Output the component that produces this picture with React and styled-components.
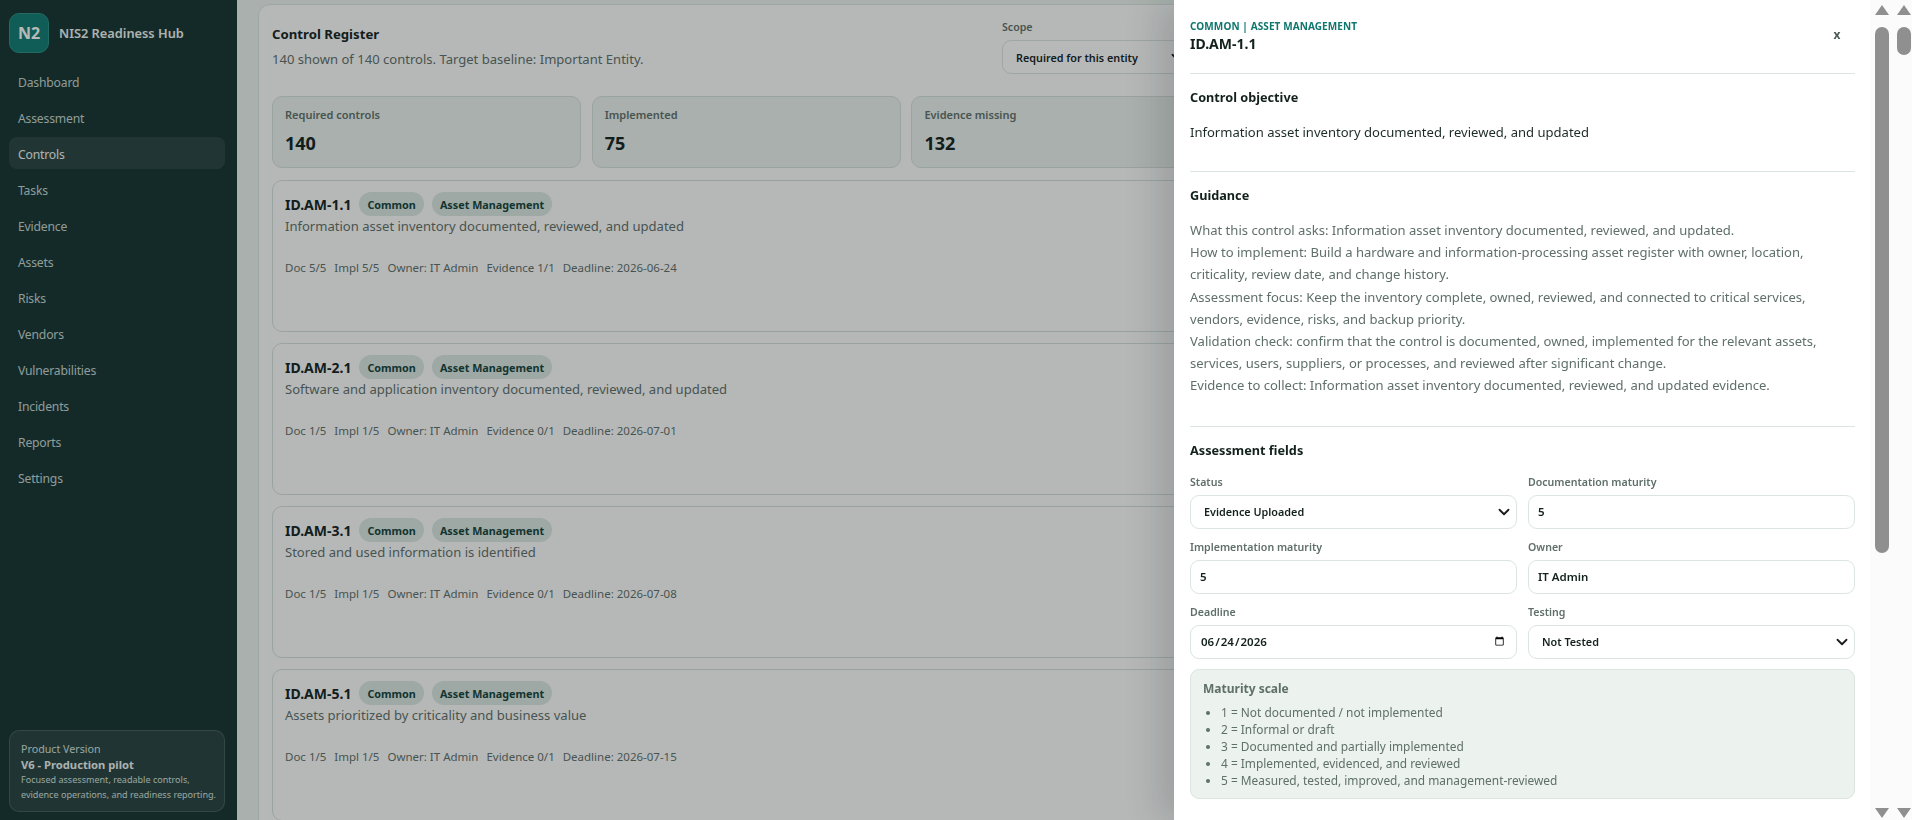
import React from "react";
import styled, { createGlobalStyle } from "styled-components";
import { ChevronDown } from "lucide-react";

const Global = createGlobalStyle`
  html, body { margin: 0; height: 100%; overflow: hidden; background: #ebf3ee; }
  * { box-sizing: border-box; }
  body { font-family: "Noto Sans", "Liberation Sans", sans-serif; color: #13211d; }
`;

const Shell = styled.div`
  display: grid;
  grid-template-columns: 237px 1fr;
  width: 1912px;
  height: 820px;
  overflow: hidden;
`;

const Sidebar = styled.aside`
  background: #163331;
  padding: 13px 12px 8px 9px;
  display: flex;
  flex-direction: column;
  height: 820px;
`;

const Brand = styled.div`
  display: flex;
  align-items: center;
  gap: 10px;
  margin-bottom: 12px;
`;

const LogoMark = styled.div`
  width: 40px;
  height: 40px;
  border-radius: 10px;
  background: #0f7b71;
  border: 1px solid #2b8f85;
  color: #fff;
  font-size: 16px;
  font-weight: 700;
  display: flex;
  align-items: center;
  justify-content: center;
`;

const BrandName = styled.div`
  color: #f0f5f3;
  font-size: 12.8px;
  font-weight: 600;
`;

const Nav = styled.nav`
  display: flex;
  flex-direction: column;
  gap: 4px;
`;

const NavItem = styled.a`
  height: 32px;
  padding: 2px 9px 0;
  display: flex;
  align-items: center;
  border-radius: 8px;
  font-size: 12.2px;
  letter-spacing: -0.2px;
  color: ${(p) => (p.$active ? "#f3f7f5" : "#c6d6d1")};
  background: ${(p) => (p.$active ? "rgba(255,255,255,0.08)" : "transparent")};
`;

const VersionCard = styled.div`
  margin-top: auto;
  height: 82px;
  padding: 11px 10px 9px 11px;
  border-radius: 10px;
  background: rgba(255, 255, 255, 0.07);
  border: 1px solid rgba(255, 255, 255, 0.14);
  color: #d5e2de;
`;

const VersionLabel = styled.div`
  font-size: 10.7px;
  line-height: 14.5px;
`;

const VersionName = styled.div`
  font-size: 11.2px;
  line-height: 15px;
  font-weight: 700;
  color: #eef4f2;
`;

const VersionNote = styled.div`
  font-size: 9.05px;
  line-height: 15px;
  white-space: nowrap;
`;

const Main = styled.main`
  padding: 4px 0 0 21px;
  min-width: 0;
  overflow: hidden;
`;

const Panel = styled.section`
  width: 1616px;
  padding: 12px 13px;
  background: #fefefe;
  border: 1px solid #dce5e0;
  border-radius: 12px 12px 0 0;
  height: 900px;
`;

const PanelHead = styled.header`
  display: flex;
  justify-content: space-between;
  height: 79px;
`;

const PanelTitle = styled.h2`
  margin: 7px 0 0;
  font-size: 13.2px;
  line-height: 20px;
  font-weight: 700;
`;

const PanelSub = styled.p`
  margin: 6px 0 0;
  font-size: 13.05px;
  line-height: 18px;
  color: #5f6f69;
`;

const ScopeField = styled.div`
  width: 188px;
  margin-right: 670px;
  padding-top: 2px;
`;

const FieldLabel = styled.label`
  display: block;
  font-size: 10.6px;
  line-height: 16px;
  font-weight: 600;
  color: #5f6f69;
`;

const Stats = styled.div`
  display: grid;
  grid-template-columns: repeat(5, 1fr);
  gap: 10.5px;
  margin-bottom: 12px;
`;

const StatCard = styled.div`
  height: 72px;
  padding: 10px 12px;
  background: #ecf2ee;
  border: 1px solid #d5e0da;
  border-radius: 10px;
`;

const StatLabel = styled.div`
  font-size: 11px;
  line-height: 16px;
  font-weight: 600;
  color: #5f6f69;
`;

const StatValue = styled.div`
  margin-top: 8px;
  font-size: 18px;
  line-height: 24px;
  font-weight: 700;
`;

const CardList = styled.div`
  display: flex;
  flex-direction: column;
  gap: 11px;
`;

const ControlCard = styled.article`
  height: 152px;
  padding: 11px 12px;
  background: #fefefe;
  border: 1px solid #d5e0da;
  border-radius: 10px;
`;

const CardTop = styled.div`
  display: flex;
  align-items: center;
  gap: 8px;
  height: 24px;
`;

const ControlId = styled.strong`
  font-size: 14px;
  font-weight: 700;
`;

const Chip = styled.span`
  height: 24px;
  padding: 0 8px;
  display: inline-flex;
  align-items: center;
  border-radius: 12px;
  background: #dbe8e2;
  color: #14413a;
  font-size: 10.8px;
  font-weight: 700;
`;

const CardDesc = styled.p`
  margin: 0;
  font-size: 13.05px;
  line-height: 20px;
  color: #5f6f69;
`;

const CardMeta = styled.div`
  display: flex;
  gap: 8px;
  margin-top: 24px;
  font-size: 11.5px;
  line-height: 16px;
  color: #5f6f69;
`;

const Overlay = styled.div`
  position: fixed;
  inset: 0;
  background: rgba(16, 24, 22, 0.3);
`;

const Drawer = styled.aside`
  position: fixed;
  top: 0;
  bottom: 0;
  right: 0;
  left: 1174px;
  display: flex;
  background: #fff;
  box-shadow: -14px 0 34px rgba(10, 20, 18, 0.16);
`;

const DrawerBody = styled.div`
  flex: 1;
  min-width: 0;
  padding: 18px 15px 0 16px;
  height: 900px;
`;

const DrawerHead = styled.header`
  display: flex;
  justify-content: space-between;
  align-items: flex-start;
  height: 56px;
  border-bottom: 1px solid #dce5e0;
`;

const Kicker = styled.div`
  font-size: 10px;
  line-height: 16px;
  font-weight: 700;
  letter-spacing: 0.01em;
  text-transform: uppercase;
  color: #0f766e;
`;

const DrawerTitle = styled.h3`
  margin: 0;
  font-size: 14px;
  line-height: 20px;
  font-weight: 700;
`;

const CloseButton = styled.button`
  width: 30px;
  height: 30px;
  margin: 1px 3px 0 0;
  border: 0;
  background: transparent;
  font: 700 12px "Noto Sans", sans-serif;
  color: #4b5a55;
`;

const Section = styled.section`
  padding-top: 13px;
  padding-bottom: ${(p) => p.$pb || 0}px;
  border-bottom: ${(p) => (p.$plain ? "0" : "1px solid #dce5e0")};
`;

const SectionTitle = styled.h4`
  margin: 0;
  font-size: 12.7px;
  line-height: 20px;
  font-weight: 700;
`;

const Objective = styled.p`
  margin: 15px 0 0;
  font-size: 13.05px;
  line-height: 20px;
  color: #1c2b27;
`;

const GuidanceText = styled.div`
  margin-top: 14px;
  font-size: 13.05px;
  line-height: 22.2px;
  color: #5f6f69;
`;

const FormGrid = styled.div`
  display: grid;
  grid-template-columns: 1fr 1fr;
  column-gap: 11px;
  row-gap: 10px;
  margin-top: 14px;
`;

const Field = styled.div`
  display: flex;
  flex-direction: column;
  gap: 5px;
`;

const Control = styled.input`
  width: 100%;
  height: 34px;
  padding: 0 9px;
  border: 1px solid #dce5e0;
  border-radius: 9px;
  background: #fff;
  font: 600 11.5px "Noto Sans", sans-serif;
  color: #13211d;
`;

const PickerWrap = styled.div`
  position: relative;
  width: 100%;
  height: 34px;
  margin-top: ${(p) => p.$mt || 0}px;
`;

const Picker = styled.select`
  appearance: none;
  width: 100%;
  height: 34px;
  padding: 0 30px 0 13px;
  border: 1px solid #dce5e0;
  border-radius: 9px;
  background: #fff;
  font: 600 10.8px "Noto Sans", sans-serif;
  color: #13211d;
`;

const PickerArrow = styled(ChevronDown)`
  position: absolute;
  right: 4px;
  top: 8px;
  width: 18px;
  height: 18px;
  stroke-width: 2.4;
  color: #1a1a1a;
  pointer-events: none;
`;

const ScaleBox = styled.div`
  margin-top: 10px;
  height: 130px;
  padding: 10px 12px;
  background: #ecf2ee;
  border: 1px solid #dce5e0;
  border-radius: 9px;
  color: #5f6f69;
`;

const ScaleTitle = styled.div`
  font-size: 12px;
  line-height: 18px;
  font-weight: 700;
`;

const ScaleList = styled.ul`
  margin: 6px 0 0;
  padding-left: 18px;
  font-size: 11.9px;
  line-height: 17px;
`;

const Gutter = styled.div`
  width: 42px;
  background: #fbfbfb;
  display: flex;
  gap: 8px;
  padding-left: 5px;
  flex: none;
`;

const Rail = styled.div`
  width: 14px;
  height: 820px;
  position: relative;
`;

const Thumb = styled.div`
  position: absolute;
  left: 0;
  top: 27px;
  width: 14px;
  height: ${(p) => p.$h}px;
  border-radius: 7px;
  background: #8f8f8f;
`;

const Arrow = styled.div`
  position: absolute;
  left: 0;
  ${(p) => (p.$down ? "bottom: 2px;" : "top: 5px;")}
  width: 0;
  height: 0;
  border-left: 7px solid transparent;
  border-right: 7px solid transparent;
  ${(p) => (p.$down ? "border-top: 10px solid #8f8f8f;" : "border-bottom: 10px solid #8f8f8f;")}
`;

const navItems = ["Dashboard", "Assessment", "Controls", "Tasks", "Evidence", "Assets", "Risks", "Vendors", "Vulnerabilities", "Incidents", "Reports", "Settings"];

const controls = [
  { id: "ID.AM-1.1", desc: "Information asset inventory documented, reviewed, and updated", doc: 5, impl: 5, ev: 1, date: "2026-06-24" },
  { id: "ID.AM-2.1", desc: "Software and application inventory documented, reviewed, and updated", doc: 1, impl: 1, ev: 0, date: "2026-07-01" },
  { id: "ID.AM-3.1", desc: "Stored and used information is identified", doc: 1, impl: 1, ev: 0, date: "2026-07-08" },
  { id: "ID.AM-5.1", desc: "Assets prioritized by criticality and business value", doc: 1, impl: 1, ev: 0, date: "2026-07-15" },
];

const guidance = [
  "What this control asks: Information asset inventory documented, reviewed, and updated.",
  "How to implement: Build a hardware and information-processing asset register with owner, location, criticality, review date, and change history.",
  "Assessment focus: Keep the inventory complete, owned, reviewed, and connected to critical services, vendors, evidence, risks, and backup priority.",
  "Validation check: confirm that the control is documented, owned, implemented for the relevant assets, services, users, suppliers, or processes, and reviewed after significant change.",
  "Evidence to collect: Information asset inventory documented, reviewed, and updated evidence.",
];

const scale = [
  "1 = Not documented / not implemented",
  "2 = Informal or draft",
  "3 = Documented and partially implemented",
  "4 = Implemented, evidenced, and reviewed",
  "5 = Measured, tested, improved, and management-reviewed",
];

function Select({ label, mt }) {
  return (
    <PickerWrap $mt={mt}>
      <Picker defaultValue={label}><option value={label}>{label}</option></Picker>
      <PickerArrow />
    </PickerWrap>
  );
}

export default function App() {
  return (
    <>
      <Global />
      <Shell>
        <Sidebar>
          <Brand>
            <LogoMark>N2</LogoMark>
            <BrandName>NIS2 Readiness Hub</BrandName>
          </Brand>
          <Nav>
            {navItems.map((n) => (
              <NavItem key={n} $active={n === "Controls"}>{n}</NavItem>
            ))}
          </Nav>
          <VersionCard>
            <VersionLabel>Product Version</VersionLabel>
            <VersionName>V6 - Production pilot</VersionName>
            <VersionNote>Focused assessment, readable controls,<br />evidence operations, and readiness reporting.</VersionNote>
          </VersionCard>
        </Sidebar>
        <Main>
          <Panel>
            <PanelHead>
              <div>
                <PanelTitle>Control Register</PanelTitle>
                <PanelSub>140 shown of 140 controls. Target baseline: Important Entity.</PanelSub>
              </div>
              <ScopeField>
                <FieldLabel>Scope</FieldLabel>
                <Select label="Required for this entity" mt={5} />
              </ScopeField>
            </PanelHead>
            <Stats>
              <StatCard><StatLabel>Required controls</StatLabel><StatValue>140</StatValue></StatCard>
              <StatCard><StatLabel>Implemented</StatLabel><StatValue>75</StatValue></StatCard>
              <StatCard><StatLabel>Evidence missing</StatLabel><StatValue>132</StatValue></StatCard>
              <StatCard />
              <StatCard />
            </Stats>
            <CardList>
              {controls.map((c) => (
                <ControlCard key={c.id}>
                  <CardTop>
                    <ControlId>{c.id}</ControlId>
                    <Chip>Common</Chip>
                    <Chip>Asset Management</Chip>
                  </CardTop>
                  <CardDesc>{c.desc}</CardDesc>
                  <CardMeta>
                    <span>Doc {c.doc}/5</span>
                    <span>Impl {c.impl}/5</span>
                    <span>Owner: IT Admin</span>
                    <span>Evidence {c.ev}/1</span>
                    <span>Deadline: {c.date}</span>
                  </CardMeta>
                </ControlCard>
              ))}
            </CardList>
          </Panel>
        </Main>
      </Shell>
      <Overlay />
      <Drawer>
        <DrawerBody>
          <DrawerHead>
            <div>
              <Kicker>Common | Asset Management</Kicker>
              <DrawerTitle>ID.AM-1.1</DrawerTitle>
            </div>
            <CloseButton>x</CloseButton>
          </DrawerHead>
          <Section $pb={29}>
            <SectionTitle>Control objective</SectionTitle>
            <Objective>Information asset inventory documented, reviewed, and updated</Objective>
          </Section>
          <Section $pb={29}>
            <SectionTitle>Guidance</SectionTitle>
            <GuidanceText>
              {guidance.map((g) => <div key={g}>{g}</div>)}
            </GuidanceText>
          </Section>
          <Section $plain>
            <SectionTitle>Assessment fields</SectionTitle>
            <FormGrid>
              <Field>
                <FieldLabel>Status</FieldLabel>
                <Select label="Evidence Uploaded" />
              </Field>
              <Field>
                <FieldLabel>Documentation maturity</FieldLabel>
                <Control defaultValue="5" />
              </Field>
              <Field>
                <FieldLabel>Implementation maturity</FieldLabel>
                <Control defaultValue="5" />
              </Field>
              <Field>
                <FieldLabel>Owner</FieldLabel>
                <Control defaultValue="IT Admin" />
              </Field>
              <Field>
                <FieldLabel>Deadline</FieldLabel>
                <Control type="date" defaultValue="2026-06-24" />
              </Field>
              <Field>
                <FieldLabel>Testing</FieldLabel>
                <Select label="Not Tested" />
              </Field>
            </FormGrid>
            <ScaleBox>
              <ScaleTitle>Maturity scale</ScaleTitle>
              <ScaleList>
                {scale.map((s) => <li key={s}>{s}</li>)}
              </ScaleList>
            </ScaleBox>
          </Section>
        </DrawerBody>
        <Gutter>
          <Rail><Arrow /><Thumb $h={526} /><Arrow $down /></Rail>
          <Rail><Arrow /><Thumb $h={28} /><Arrow $down /></Rail>
        </Gutter>
      </Drawer>
    </>
  );
}
